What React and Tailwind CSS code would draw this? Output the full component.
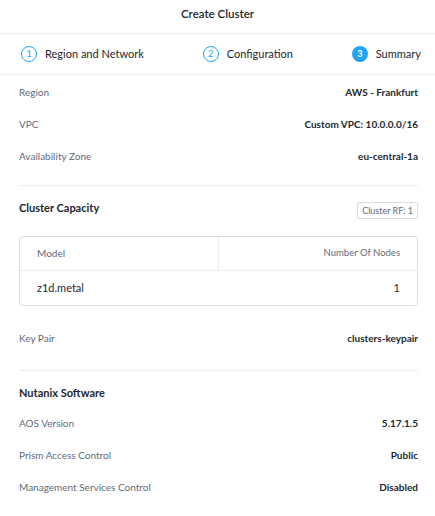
import React from "react";

const font = { fontFamily: "Lato, 'Open Sans', sans-serif" };

function Row({ label, value }) {
  return (
    <div className="flex h-8 items-center justify-between">
      <span className="text-[10px] text-[#5f6b7a]">{label}</span>
      <span className="text-[10px] font-bold text-[#22272e]">{value}</span>
    </div>
  );
}

function Step({ n, label, active }) {
  return (
    <div className="flex items-center gap-2">
      <div
        className={
          active
            ? "flex h-4 w-4 items-center justify-center rounded-full bg-[#22a5f7] text-[9px] font-bold text-white"
            : "flex h-4 w-4 items-center justify-center rounded-full border border-[#22a5f7] text-[9px] text-[#22a5f7]"
        }
      >
        {n}
      </div>
      <span className="text-[11px] text-[#22272e]">{label}</span>
    </div>
  );
}

export default function App() {
  return (
    <div className="h-[516px] w-[435px] overflow-hidden bg-white" style={font}>
      <div className="flex h-[34px] items-center justify-center border-b border-[#ececec] pb-[5px]">
        <span className="text-[11.5px] font-semibold text-[#22272e]">Create Cluster</span>
      </div>
      <div className="flex h-[41px] items-center justify-between border-b border-[#ececec] pl-[21px] pr-[14px]">
        <Step n="1" label="Region and Network" />
        <Step n="2" label="Configuration" />
        <Step n="3" label="Summary" active />
      </div>
      <div className="pl-[19px] pr-[17px]">
        <div className="border-b border-[#ececec] pb-[13px] pt-px">
          <Row label="Region" value="AWS - Frankfurt" />
          <Row label="VPC" value="Custom VPC: 10.0.0.0/16" />
          <Row label="Availability Zone" value="eu-central-1a" />
        </div>
        <div className="border-b border-[#ececec] pb-4 pt-4">
          <div className="flex h-[17px] items-center justify-between">
            <span className="-mt-[4px] text-[11px] font-bold text-[#22272e]">Cluster Capacity</span>
            <span className="flex h-[17px] items-center rounded-[2px] border border-[#d9dde2] px-[4px] text-[9px] text-[#5f6b7a]">
              Cluster RF: 1
            </span>
          </div>
          <div className="mt-[17px] rounded-[4px] border border-[#d9dde2]">
            <div className="flex h-[34px] border-b border-[#ececec]">
              <div className="flex flex-1 items-center border-r border-[#ececec] pl-[17px] text-[10px] text-[#5f6b7a]">
                Model
              </div>
              <div className="flex flex-1 items-center justify-end pr-[17px] text-[9.5px] text-[#5f6b7a]">
                Number Of Nodes
              </div>
            </div>
            <div className="flex h-[34px] items-center justify-between pl-[17px] pr-[17px] text-[11px] text-[#22272e]">
              <span>z1d.metal</span>
              <span>1</span>
            </div>
          </div>
          <div className="mt-4">
            <Row label="Key Pair" value="clusters-keypair" />
          </div>
        </div>
        <div className="border-b border-[#ececec] pb-[13px] pt-[14px]">
          <div className="mb-[6px] flex h-4 items-center">
            <span className="text-[11px] font-bold text-[#22272e]">Nutanix Software</span>
          </div>
          <Row label="AOS Version" value="5.17.1.5" />
          <Row label="Prism Access Control" value="Public" />
          <Row label="Management Services Control" value="Disabled" />
        </div>
      </div>
    </div>
  );
}
